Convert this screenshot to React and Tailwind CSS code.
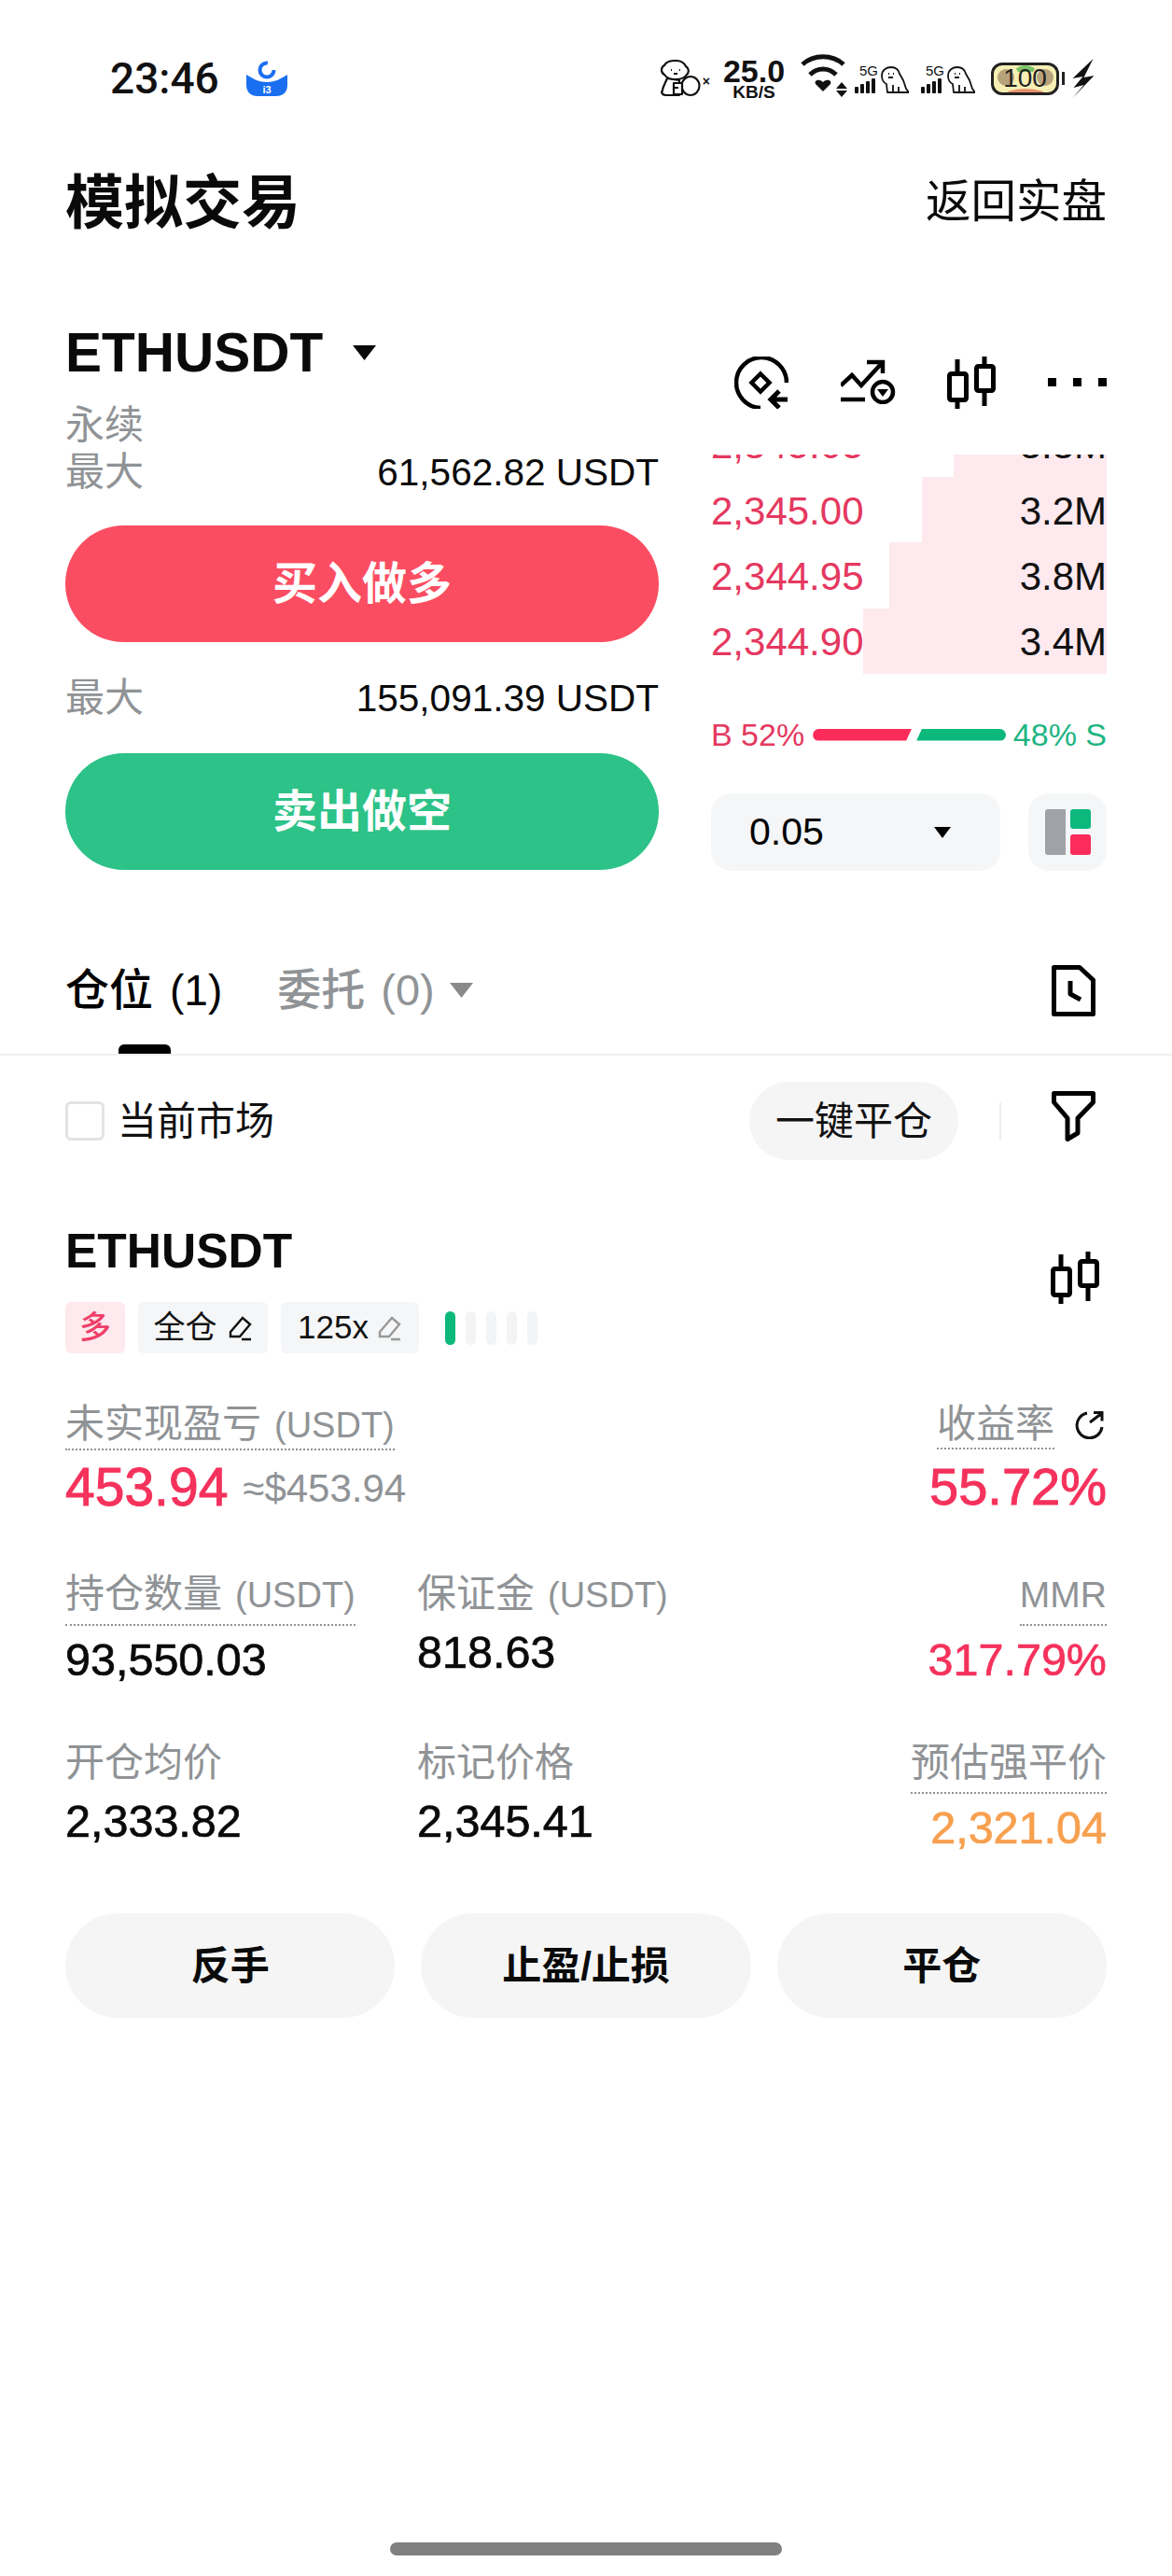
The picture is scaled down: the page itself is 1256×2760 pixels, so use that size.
const CandleIcon = ({ className }) => (
  <svg viewBox="0 0 52 56" className={className} fill="none" stroke="#000" strokeWidth="5">
    <path d="M11 3v15M11 47v9M40 0v10M40 37v16" />
    <rect x="2.5" y="18.5" width="18" height="28" rx="2" />
    <rect x="31.5" y="10.5" width="18" height="26" rx="2" />
  </svg>
);

const Caret = ({ className }) => (
  <svg viewBox="0 0 24 16" className={className} preserveAspectRatio="none">
    <path d="M0 0h24L12 16z" fill="currentColor" />
  </svg>
);

const Pencil = ({ color }) => (
  <svg viewBox="0 0 26 28" className="w-[26px] h-[28px]" fill="none" stroke={color} strokeWidth="2.4">
    <path d="M2 18 15 3l8 7-11 13H2zM14 26h10" />
  </svg>
);

const BoxingPuppy = () => (
  <svg viewBox="0 0 45 40" className="w-[45px] h-[40px]" fill="#fff" stroke="#111" strokeWidth="2.2" strokeLinejoin="round">
    <path d="M9 20C7 25 4 30 4 33c-2 2 0 5 4 5h14V22z" />
    <path d="M6 16C2 14 2 8 6 6c2-4 8-5 12-5 5 0 9 2 11 6 3 2 4 6 1 9-2 3-6 5-12 5-6 0-10-2-12-5z" />
    <ellipse cx="34" cy="28" rx="9.5" ry="10" />
    <path d="M16 25h9v12h-9zM16 30h5" />
    <path d="M13 11h1M22 11h1M16 15h4" />
  </svg>
);

const Puppy = () => (
  <svg viewBox="0 0 31 29" className="w-[31px] h-[29px]" fill="#fff" stroke="#111" strokeWidth="1.8" strokeLinejoin="round">
    <path d="M2 10C2 4 7 1 12 1c5 0 8 3 9 7l4 7 3 9 3 4H12l-4 0-1-9c-3-1-5-5-5-9z" />
    <path d="M9 8h1M14 8h1M9 12h5M14 28v-8M20 28v-6" />
  </svg>
);

const Signal = () => (
  <div className="flex items-end h-[32px] w-[27px] relative">
    <span className="absolute left-[5px] top-0 text-[15px] leading-[15px] font-medium">5G</span>
    <div className="flex items-end gap-[2px] h-[17px] mt-auto">
      <i className="w-[4px] h-[7px] bg-[#111] rounded-[1px]" />
      <i className="w-[4px] h-[10px] bg-[#111] rounded-[1px]" />
      <i className="w-[4px] h-[13px] bg-[#111] rounded-[1px]" />
      <i className="w-[4px] h-[16px] bg-[#111] rounded-[1px]" />
    </div>
  </div>
);

function StatusBar() {
  return (
    <div className="h-[168px] flex items-center justify-between pl-[118px] pr-[83px]">
      <div className="flex items-center gap-[29px]">
        <span className="font-['Roboto'] font-medium text-[46px] leading-none text-[#111]">23:46</span>
        <svg viewBox="0 0 44 38" className="w-[44px] h-[38px]">
          <path d="M0 15c8 5 14 8 22 8s14-3 22-8v11c0 8-5 12-12 12H12C5 38 0 34 0 26z" fill="#1a6ff0" />
          <circle cx="22" cy="10" r="7.5" fill="none" stroke="#1a6ff0" strokeWidth="4" strokeDasharray="36 12" />
          <text x="22" y="35" textAnchor="middle" fontSize="11" fontWeight="700" fill="#fff">i3</text>
        </svg>
      </div>
      <div className="flex items-center text-[#111]">
        <BoxingPuppy />
        <span className="text-[14px] ml-[2px] mt-[6px] font-bold">×</span>
        <div className="ml-[13px] flex flex-col items-center font-bold w-[68px]">
          <span className="text-[34px] leading-[28px]">25.0</span>
          <span className="text-[19px] leading-[17px]">KB/S</span>
        </div>
        <svg viewBox="0 0 52 48" className="ml-[15px] mb-[8px] w-[52px] h-[48px]" fill="none" stroke="#111" strokeWidth="5">
          <path d="M3 13C15 2 35 2 47 13M11 24c8-8 20-8 28 0" />
          <path d="M25 42l-8-8c-2-4 4-6 8-2 4-4 10-2 8 2z" fill="#111" stroke="none" />
          <path d="M45 32l6 7H39zM45 48l6-7H39z" fill="#111" stroke="none" />
        </svg>
        <div className="ml-[7px]"><Signal /></div>
        <div className="mt-[2px]"><Puppy /></div>
        <div className="ml-[13px]"><Signal /></div>
        <div className="mt-[2px]"><Puppy /></div>
        <div className="ml-[17px] relative w-[73px] h-[35px] rounded-[12px] border-[3px] border-[#222] bg-[#f6efb4] overflow-hidden flex items-center justify-center text-[28px] leading-none text-[#222]">
          <svg viewBox="0 0 67 29" className="absolute inset-0 w-full h-full">
            <circle cx="13" cy="13" r="9" fill="#b7a27a" />
            <circle cx="55" cy="13" r="9" fill="#b7a27a" />
            <path d="M24 4c3-5 17-5 20 0l-2 3H26z" fill="#7cc267" />
            <path d="M14 29c8-5 32-5 40 0z" fill="#e58e6c" />
          </svg>
          <span className="relative">100</span>
        </div>
        <i className="ml-[3px] w-[3px] h-[14px] bg-[#222]" />
        <svg viewBox="0 0 23 42" className="ml-[8px] w-[24px] h-[42px]">
          <path d="M22 0 0 21l11-2L1 31l11-3L0 42 23 18l-11 2z" fill="#111" />
        </svg>
      </div>
    </div>
  );
}

const asks = [
  { price: "2,345.05", size: "3.3M", bar: "w-[164px]" },
  { price: "2,345.00", size: "3.2M", bar: "w-[198px]" },
  { price: "2,344.95", size: "3.8M", bar: "w-[233px]" },
  { price: "2,344.90", size: "3.4M", bar: "w-[261px]" },
];

function OrderBook() {
  return (
    <div className="mt-[49px] h-[235px] overflow-hidden flex flex-col justify-end">
      {asks.map((row) => (
        <div key={row.price} className="relative shrink-0 h-[70.33px] pt-[2px] flex items-center justify-between text-[42px]">
          <div className={`absolute right-0 inset-y-0 bg-[#fde9ee] ${row.bar}`} />
          <span className="relative text-[#e5385f]">{row.price}</span>
          <span className="relative text-[#111]">{row.size}</span>
        </div>
      ))}
    </div>
  );
}

function RightPanel() {
  return (
    <div className="w-[424px]">
      <div className="mt-[36px] h-[56px] flex items-start justify-between">
        <svg viewBox="0 0 58 56" className="ml-[25px] w-[58px] h-[56px]" fill="none" stroke="#000" strokeWidth="4.5">
          <path d="M56 28A27 27 0 1 0 28 55" />
          <path d="M28 18.5 37.5 28 28 37.5 18.5 28z" />
          <path d="M57 46H40M48 37l-9 9 9 9" strokeWidth="5" />
        </svg>
        <svg viewBox="0 0 59 48" className="mt-[3px] w-[59px] h-[48px]" fill="none" stroke="#000" strokeWidth="4.5">
          <path d="M0 28 12 17l10 11L45 3M28 3h17v12M0 43h26" />
          <circle cx="45" cy="35" r="11" />
          <path d="M39 32h12l-6 8z" fill="#000" stroke="none" />
        </svg>
        <CandleIcon className="w-[52px] h-[56px]" />
        <div className="mt-[23px] flex gap-[18px]">
          <i className="w-[9px] h-[9px] bg-black" />
          <i className="w-[9px] h-[9px] bg-black" />
          <i className="w-[9px] h-[9px] bg-black" />
        </div>
      </div>
      <OrderBook />
      <div className="mt-[45px] h-[40px] flex items-center text-[34px]">
        <span className="text-[#e5385f]">B 52%</span>
        <div className="ml-[9px] w-[106px] h-[13px] bg-[#fb2c5a] rounded-l-full [clip-path:polygon(0_0,100%_0,calc(100%-6px)_100%,0_100%)]" />
        <div className="ml-[5px] w-[96px] h-[13px] bg-[#0cb87c] rounded-r-full [clip-path:polygon(6px_0,100%_0,100%_100%,0_100%)]" />
        <span className="ml-auto text-[#1fb583]">48% S</span>
      </div>
      <div className="mt-[43px] flex justify-between">
        <div className="w-[310px] h-[83px] rounded-[22px] bg-[#f5f6f7] flex items-center justify-between pl-[41px] pr-[53px] text-[41px] text-black">
          0.05
          <Caret className="w-[18px] h-[12px]" />
        </div>
        <div className="w-[84px] h-[83px] rounded-[22px] bg-[#f5f6f7] flex items-center justify-center">
          <div className="flex gap-[5px]">
            <i className="w-[22px] h-[49px] bg-[#a0a2a7] rounded-l-[3px]" />
            <div className="flex flex-col gap-[6px]">
              <i className="w-[22px] h-[21px] bg-[#0cb87c] rounded-[3px]" />
              <i className="w-[22px] h-[22px] bg-[#fb2c5a] rounded-[3px]" />
            </div>
          </div>
        </div>
      </div>
    </div>
  );
}

const MaxRow = ({ className, value }) => (
  <div className={`${className} h-[42px] flex items-center justify-between`}>
    <span className="text-[42px] leading-[42px] text-[#909396]">最大</span>
    <span className="text-[40.5px] text-[#0a0a0a]">{value}</span>
  </div>
);

function LeftPanel() {
  return (
    <div className="w-[636px]">
      <div className="h-[64px] flex items-center">
        <span className="text-[58.5px] font-bold text-[#0a0a0a]">ETHUSDT</span>
        <Caret className="ml-[32px] w-[25px] h-[16px] text-[#0a0a0a]" />
      </div>
      <div className="mt-[25px] h-[42px] text-[42px] leading-[42px] text-[#909396]">永续</div>
      <MaxRow className="mt-[8px]" value="61,562.82 USDT" />
      <button className="mt-[36px] w-full h-[125px] rounded-full bg-[#fb4d62] text-white text-[48px] font-bold">买入做多</button>
      <MaxRow className="mt-[39px]" value="155,091.39 USDT" />
      <button className="mt-[38px] w-full h-[125px] rounded-full bg-[#2dc287] text-white text-[48px] font-bold">卖出做空</button>
    </div>
  );
}

function Tabs() {
  return (
    <div className="h-[198px] pt-[98px] border-b-2 border-[#f1f1f1]">
      <div className="px-[70px] h-[60px] flex items-center text-[47px]">
        <span className="text-black font-medium">仓位</span>
        <span className="ml-[18px] text-[46px] text-black">(1)</span>
        <span className="ml-[59px] text-[#909396] font-medium">委托</span>
        <span className="ml-[17px] text-[47px] text-[#909396]">(0)</span>
        <Caret className="ml-[16px] w-[25px] h-[16px] text-[#8a8a8a]" />
        <svg viewBox="0 0 47 55" className="ml-auto mr-[12px] w-[47px] h-[55px]" fill="none" stroke="#000" strokeWidth="5" strokeLinejoin="round">
          <path d="M2.5 2.5H30L44.5 16v36.500h-42z" />
          <path d="M20 17v14l11 6" />
        </svg>
      </div>
      <div className="ml-[127px] mt-[28px] w-[56px] h-[10px] bg-black rounded-t-[6px]" />
    </div>
  );
}

function FilterRow() {
  return (
    <div className="mt-[28px] px-[70px] h-[84px] flex items-center">
      <i className="w-[42px] h-[42px] border-[3px] border-[#e3e3e3] rounded-[6px]" />
      <span className="ml-[14px] text-[42px] text-[#111]">当前市场</span>
      <button className="ml-auto w-[224px] h-[84px] rounded-full bg-[#f5f5f5] text-[42px] text-[#111]">一键平仓</button>
      <i className="ml-[44px] w-[2px] h-[40px] bg-[#eeeeee]" />
      <svg viewBox="0 0 47 54" className="ml-[54px] mr-[12px] mb-[10px] w-[47px] h-[54px]" fill="none" stroke="#000" strokeWidth="5" strokeLinejoin="round">
        <path d="M2.5 2.500h42V12L28 29v16l-11 6.500V29L2.500 12z" />
      </svg>
    </div>
  );
}

const Label = ({ children, dotted, latin, pad = "pb-0" }) => (
  <div className={`w-fit text-[42px] leading-[50px] text-[#909396] whitespace-nowrap ${dotted ? `border-b-2 border-dotted border-[#909396] ${pad}` : ""}`}>
    {children}
    {latin && <span className="ml-[14px] text-[38px]">{latin}</span>}
  </div>
);

const Value = ({ className = "text-[#0a0a0a]", children }) => (
  <div className={`h-[56px] flex items-center text-[48.500px] [-webkit-text-stroke:0.7px_currentColor] ${className}`}>{children}</div>
);

function PositionCard() {
  return (
    <div className="px-[70px]">
      <div className="mt-[67px] flex justify-between items-center">
        <div>
          <div className="text-[51.500px] leading-[60px] font-bold text-[#0a0a0a]">ETHUSDT</div>
          <div className="mt-[25px] h-[55px] flex items-center">
            <span className="w-[64px] h-[55px] rounded-[6px] bg-[#fde9ee] text-[#ef3f69] text-[34px] font-medium flex items-center justify-center">多</span>
            <span className="ml-[14px] w-[139px] h-[55px] rounded-[6px] bg-[#f5f6f7] text-[34px] text-[#111] flex items-center justify-center gap-[12px]">
              全仓 <Pencil color="#111" />
            </span>
            <span className="ml-[14px] w-[148px] h-[55px] rounded-[6px] bg-[#f5f6f7] text-[35px] text-[#111] flex items-center justify-center gap-[10px]">
              125x <Pencil color="#999" />
            </span>
            <div className="ml-[28px] flex gap-[11px]">
              <i className="w-[11px] h-[36px] rounded-full bg-[#0cb87c]" />
              <i className="w-[11px] h-[36px] rounded-full bg-[#f3f4f5]" />
              <i className="w-[11px] h-[36px] rounded-full bg-[#f3f4f5]" />
              <i className="w-[11px] h-[36px] rounded-full bg-[#f3f4f5]" />
              <i className="w-[11px] h-[36px] rounded-full bg-[#f3f4f5]" />
            </div>
          </div>
        </div>
        <CandleIcon className="mr-[8px] mb-[22px] w-[52px] h-[56px]" />
      </div>

      <div className="mt-[51px] flex justify-between items-start">
        <div>
          <Label dotted latin="(USDT)">未实现盈亏</Label>
          <div className="mt-[12px] h-[56px] flex items-center">
            <span className="text-[57px] [-webkit-text-stroke:1px_currentColor] text-[#f5325c]">453.94</span>
            <span className="ml-[16px] text-[42px] text-[#909396]">≈$453.94</span>
          </div>
        </div>
        <div className="flex flex-col items-end">
          <div className="flex items-start gap-[21px] pr-[3px]">
            <Label dotted>收益率</Label>
            <svg viewBox="0 0 32 30" className="mt-[11px] w-[32px] h-[30px]" fill="none" stroke="#111" strokeWidth="3">
              <path d="M14 2A13.500 13.500 0 1 0 30 17M17 12 30 2M21 1.500h9v9" />
            </svg>
          </div>
          <div className="mt-[12px] h-[56px] flex items-center text-[56px] [-webkit-text-stroke:1px_currentColor] text-[#f5325c]">55.72%</div>
        </div>
      </div>

      <div className="mt-[61px] flex items-start">
        <div className="w-[377px]">
          <Label dotted latin="(USDT)" pad="pb-[6px]">持仓数量</Label>
          <Value className="mt-[8px] text-[#0a0a0a]">93,550.03</Value>
        </div>
        <div>
          <Label latin="(USDT)">保证金</Label>
          <Value className="mt-[8px] text-[#0a0a0a]">818.63</Value>
        </div>
        <div className="ml-auto flex flex-col items-end">
          <Label dotted pad="pb-[6px]"><span className="text-[39px]">MMR</span></Label>
          <Value className="mt-[8px] text-[#f5325c]">317.79%</Value>
        </div>
      </div>

      <div className="mt-[58px] flex items-start">
        <div className="w-[377px]">
          <Label>开仓均价</Label>
          <Value className="mt-[9px] text-[#0a0a0a]">2,333.82</Value>
        </div>
        <div>
          <Label>标记价格</Label>
          <Value className="mt-[9px] text-[#0a0a0a]">2,345.41</Value>
        </div>
        <div className="ml-auto flex flex-col items-end">
          <Label dotted pad="pb-[6px]">预估强平价</Label>
          <Value className="mt-[8px] text-[#f7a04f]">2,321.04</Value>
        </div>
      </div>

      <div className="mt-[64px] grid grid-cols-3 gap-[28px]">
        <button className="h-[112px] rounded-full bg-[#f5f5f5] text-[42px] font-bold text-[#0a0a0a]">反手</button>
        <button className="h-[112px] rounded-full bg-[#f5f5f5] text-[42px] font-bold text-[#0a0a0a]">止盈/止损</button>
        <button className="h-[112px] rounded-full bg-[#f5f5f5] text-[42px] font-bold text-[#0a0a0a]">平仓</button>
      </div>
    </div>
  );
}

export default function App() {
  return (
    <div className="w-[1256px] h-[2760px] bg-white overflow-hidden font-['Liberation_Sans','Noto_Sans_CJK_SC',sans-serif]">
      <StatusBar />
      <div className="h-[94px] px-[70px] flex items-center justify-between">
        <h1 className="pt-[5px] text-[63px] font-bold text-[#0a0a0a]">模拟交易</h1>
        <span className="pt-[2px] text-[48.5px] text-[#0a0a0a]">返回实盘</span>
      </div>
      <div className="mt-[84px] px-[70px] flex justify-between">
        <LeftPanel />
        <RightPanel />
      </div>
      <Tabs />
      <FilterRow />
      <PositionCard />
      <div className="mt-[562px] mx-auto w-[420px] h-[14px] rounded-full bg-[#808080]" />
    </div>
  );
}
